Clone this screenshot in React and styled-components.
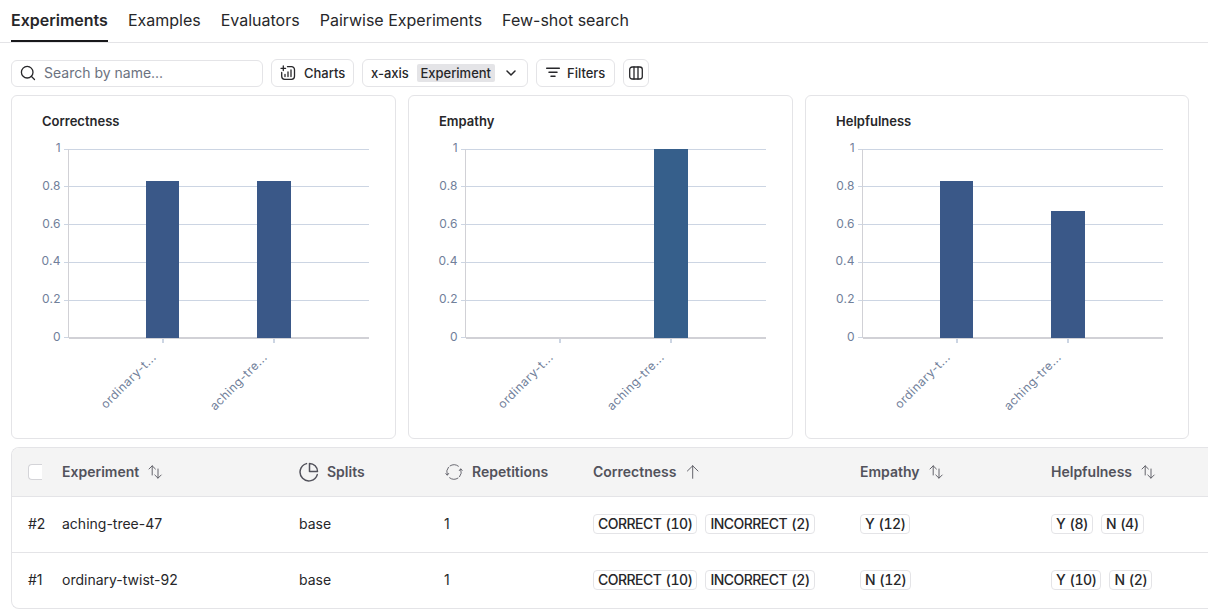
import React from "react";
import styled, { createGlobalStyle, css } from "styled-components";

const GlobalStyle = createGlobalStyle`
  *, *::before, *::after { box-sizing: border-box; }
  body {
    margin: 0;
    background: #fff;
    color: #27272a;
    font-family: Inter, "Liberation Sans", sans-serif;
    font-size: 14px;
    line-height: 20px;
    overflow: hidden;
  }
`;

const Page = styled.div`
  height: 615px;
  overflow: hidden;
`;

const Tabs = styled.nav`
  display: flex;
  gap: 20px;
  height: 43px;
  padding: 0 11px;
  border-bottom: 1px solid #e4e4e7;
`;

const Tab = styled.a`
  height: 42px;
  padding-top: 10px;
  font-size: 16px;
  line-height: 20px;
  white-space: nowrap;
  ${(p) =>
    p.$active &&
    css`
      font-weight: 600;
      border-bottom: 2px solid #18181b;
    `}
`;

const Toolbar = styled.div`
  display: flex;
  align-items: flex-end;
  gap: 8px;
  height: 44px;
  padding-left: 11px;
`;

const SearchBox = styled.label`
  display: flex;
  align-items: center;
  gap: 8px;
  width: 252px;
  height: 27px;
  padding: 0 0 1px 8px;
  border: 1px solid #e4e4e7;
  border-radius: 6px;
`;

const SearchInput = styled.input`
  flex: 1;
  min-width: 0;
  height: 20px;
  padding: 0;
  border: 0;
  outline: 0;
  background: transparent;
  font: inherit;
  &::placeholder { color: #6b7280; opacity: 1; }
`;

const Button = styled.button`
  display: flex;
  align-items: center;
  gap: ${(p) => p.$gap || 8}px;
  width: ${(p) => p.$width}px;
  height: 28px;
  padding: 0 0 0 ${(p) => p.$pad || 8}px;
  border: 1px solid #e4e4e7;
  border-radius: 6px;
  background: #fff;
  color: #27272a;
  font: 500 13px/18px Inter, "Liberation Sans", sans-serif;
  white-space: nowrap;
`;

const Chip = styled.span`
  height: 18px;
  padding: 0 3.5px;
  border-radius: 2px;
  background: #e4e4e7;
`;

const Charts = styled.section`
  display: grid;
  grid-template-columns: 385px 385px 384px;
  gap: 12px;
  padding: 8px 0 8px 11px;
`;

const Card = styled.article`
  height: 344px;
  border: 1px solid #e4e4e7;
  border-radius: 6px;
  overflow: hidden;
`;

const CardTitle = styled.h2`
  height: 44px;
  margin: 0;
  padding: 15px 0 0 30px;
  font-size: 13px;
  font-weight: 600;
  line-height: 20px;
`;

const Plot = styled.svg`
  display: block;
  text { font: 12px Inter, "Liberation Sans", sans-serif; fill: #71809a; letter-spacing: 0.25px; }
`;

const Table = styled.section`
  margin-left: 11px;
  border: 1px solid #e4e4e7;
  border-right: 0;
  border-radius: 8px 0 0 8px;
  overflow: hidden;
`;

const Row = styled.div`
  display: grid;
  grid-template-columns: 34px 237px 145px 149px 267px 191px 1fr;
  align-items: center;
  height: 56px;
  padding: 0 0 1px 16px;
  border-bottom: 1px solid #e4e4e7;
  &:last-child { height: 55px; border-bottom: 0; }
`;

const HeadRow = styled(Row)`
  height: 49px;
  padding-bottom: 0;
  background: #f4f4f4;
  color: #52525b;
  font-weight: 600;
`;

const Cell = styled.div`
  display: flex;
  align-items: center;
  gap: 8px;
  white-space: nowrap;
`;

const Checkbox = styled.span`
  width: 14px;
  height: 16px;
  border: 1px solid #d4d4d8;
  border-right: 0;
  border-radius: 4px 0 0 4px;
  background: #fff;
`;

const Tag = styled.span`
  height: 20px;
  padding: 0 4px;
  border: 1px solid #e4e4e7;
  border-radius: 4px;
  font-weight: 500;
  line-height: 18px;
  letter-spacing: -0.53px;
  word-spacing: 1px;
  font-variant-numeric: tabular-nums;
`;

function Icon({ size = 16, width = 1.5, box = 16, children }) {
  return (
    <svg width={size} height={size} viewBox={`0 0 ${box} ${box}`} fill="none" stroke="currentColor"
      strokeWidth={width} strokeLinecap="round" strokeLinejoin="round">
      {children}
    </svg>
  );
}

const SearchIcon = () => (
  <Icon width={1.3}><circle cx="7.2" cy="7.2" r="5.8" /><path d="m11.5 11.5 3 3" /></Icon>
);
const ChartIcon = () => (
  <Icon width={1.3}>
    <path d="M3.3 1v4.6M1 3.3h4.6M7.5 1.7h4a3 3 0 0 1 3 3v6.6a3 3 0 0 1-3 3H4.7a3 3 0 0 1-3-3V7.5" />
    <path d="M5 9.5v2M8 7v4.5M11 5v6.5" />
  </Icon>
);
const ChevronIcon = () => <Icon><path d="m4 6 4 4 4-4" /></Icon>;
const FilterIcon = () => <Icon><path d="M1.7 3.2h12.6M4 7.2h8M6 11.2h4" /></Icon>;
const ColumnsIcon = () => (
  <Icon width={1.3}><rect x="1.7" y="2" width="12.6" height="12" rx="2.5" /><path d="M6 2v12M10 2v12" /></Icon>
);
const SortIcon = () => (
  <Icon width={0.9}><path d="M5.2 11V2M2 5 5.2 1.8 8.4 5M11 5v9M7.8 11l3.2 3.2 3.2-3.2" /></Icon>
);
const SortUpIcon = () => <Icon width={0.9}><path d="M8.7 14.3V1.8M3.4 7l5.3-5.2L14 7" /></Icon>;
const SplitIcon = () => (
  <Icon size={20} box={20}>
    <path d="M7.5 1.6a8.8 8.8 0 1 0 10.8 11" />
    <path d="M10.5 1.5v8h8a8 8 0 0 0-8-8Z" />
  </Icon>
);
const RepeatIcon = () => (
  <Icon size={20} box={20} width={0.85}>
    <path d="M3.2 12.6A7.3 7.3 0 0 1 4.4 5.3M6 3.9a7.3 7.3 0 0 1 8.4.3" />
    <path d="M16.8 7.4a7.3 7.3 0 0 1-1.2 7.3M14 16.1a7.3 7.3 0 0 1-8.4-.3" />
    <path d="m1.8 11.6 1.5 1.7 1.4-1.9M18.2 8.4l-1.5-1.7-1.4 1.9" />
  </Icon>
);

const gridLines = [
  { label: "1", y: 9.5, baseline: 12.3 },
  { label: "0.8", y: 46.5, baseline: 49.5 },
  { label: "0.6", y: 84.5, baseline: 87.5 },
  { label: "0.4", y: 122.5, baseline: 125.3 },
  { label: "0.2", y: 160.5, baseline: 163.3 },
  { label: "0", y: 197.5, baseline: 200.5 },
];
const slots = [
  { label: "ordinary-t...", x: 134, width: 33, tick: 151, length: 72.5 },
  { label: "aching-tre...", x: 245, width: 34, tick: 262, length: 75 },
];
const charts = [
  { title: "Correctness", tops: [41, 41], color: "#3a5888" },
  { title: "Empathy", tops: [null, 9], color: "#365f8b" },
  { title: "Helpfulness", tops: [41, 71], color: "#3a5888" },
];

function BarChart({ tops, color }) {
  return (
    <Plot width="382" height="298" viewBox="0 0 382 298">
      {gridLines.map(({ label, y, baseline }) => (
        <g key={label}>
          <path d={`M52 ${y}H357`} stroke="#ccd5e3" />
          <text x="48.8" y={baseline} textAnchor="end">{label}</text>
        </g>
      ))}
      <path d="M56.5 9V198" stroke="#d1d1d6" />
      <path d="M57 198H357" stroke="#d1d1d6" strokeWidth="2" />
      {slots.map((slot, i) => (
        <g key={slot.label}>
          <path d={`M${slot.tick} 199v4`} stroke="#ccd5e3" strokeWidth="2" />
          {tops[i] !== null && (
            <rect x={slot.x} y={tops[i]} width={slot.width} height={198 - tops[i]} fill={color} />
          )}
          <text textAnchor="end" transform={`translate(${slot.tick - 6} 218) rotate(-45)`} textLength={slot.length}>
            {slot.label}
          </text>
        </g>
      ))}
    </Plot>
  );
}

const rows = [
  { id: "#2", name: "aching-tree-47", correctness: ["CORRECT (10)", "INCORRECT (2)"], empathy: ["Y (12)"], helpfulness: ["Y (8)", "N (4)"] },
  { id: "#1", name: "ordinary-twist-92", correctness: ["CORRECT (10)", "INCORRECT (2)"], empathy: ["N (12)"], helpfulness: ["Y (10)", "N (2)"] },
];

const Tags = ({ items }) => <Cell>{items.map((t) => <Tag key={t}>{t}</Tag>)}</Cell>;

export default function App() {
  return (
    <Page>
      <GlobalStyle />
      <Tabs>
        <Tab $active>Experiments</Tab>
        <Tab>Examples</Tab>
        <Tab>Evaluators</Tab>
        <Tab>Pairwise Experiments</Tab>
        <Tab>Few-shot search</Tab>
      </Tabs>
      <Toolbar>
        <SearchBox><SearchIcon /><SearchInput placeholder="Search by name..." /></SearchBox>
        <Button $width={83}><ChartIcon />Charts</Button>
        <Button $width={166}>x-axis<Chip>Experiment</Chip><ChevronIcon /></Button>
        <Button $width={79} $gap={6}><FilterIcon />Filters</Button>
        <Button $width={26} $pad={4}><ColumnsIcon /></Button>
      </Toolbar>
      <Charts>
        {charts.map((chart) => (
          <Card key={chart.title}>
            <CardTitle>{chart.title}</CardTitle>
            <BarChart {...chart} />
          </Card>
        ))}
      </Charts>
      <Table>
        <HeadRow>
          <Cell><Checkbox /></Cell>
          <Cell>Experiment<SortIcon /></Cell>
          <Cell><SplitIcon />Splits</Cell>
          <Cell><RepeatIcon />Repetitions</Cell>
          <Cell>Correctness<SortUpIcon /></Cell>
          <Cell>Empathy<SortIcon /></Cell>
          <Cell>Helpfulness<SortIcon /></Cell>
        </HeadRow>
        {rows.map((row) => (
          <Row key={row.id}>
            <Cell>{row.id}</Cell>
            <Cell>{row.name}</Cell>
            <Cell>base</Cell>
            <Cell>1</Cell>
            <Tags items={row.correctness} />
            <Tags items={row.empathy} />
            <Tags items={row.helpfulness} />
          </Row>
        ))}
      </Table>
    </Page>
  );
}
